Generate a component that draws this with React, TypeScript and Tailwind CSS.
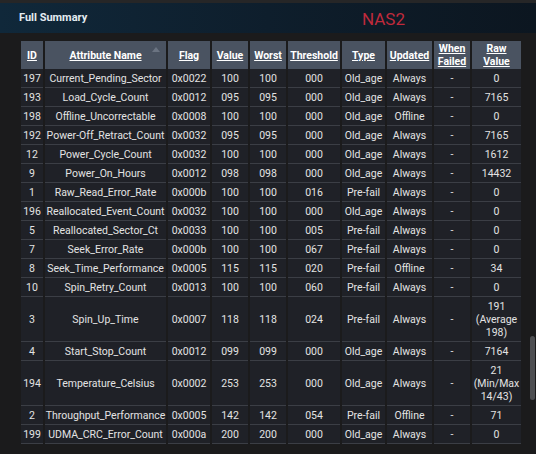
const rows: string[][] = [
  ['197', 'Current_Pending_Sector', '0x0022', '100', '100', '000', 'Old_age', 'Always', '-', '0'],
  ['193', 'Load_Cycle_Count', '0x0012', '095', '095', '000', 'Old_age', 'Always', '-', '7165'],
  ['198', 'Offline_Uncorrectable', '0x0008', '100', '100', '000', 'Old_age', 'Offline', '-', '0'],
  ['192', 'Power-Off_Retract_Count', '0x0032', '095', '095', '000', 'Old_age', 'Always', '-', '7165'],
  ['12', 'Power_Cycle_Count', '0x0032', '100', '100', '000', 'Old_age', 'Always', '-', '1612'],
  ['9', 'Power_On_Hours', '0x0012', '098', '098', '000', 'Old_age', 'Always', '-', '14432'],
  ['1', 'Raw_Read_Error_Rate', '0x000b', '100', '100', '016', 'Pre-fail', 'Always', '-', '0'],
  ['196', 'Reallocated_Event_Count', '0x0032', '100', '100', '000', 'Old_age', 'Always', '-', '0'],
  ['5', 'Reallocated_Sector_Ct', '0x0033', '100', '100', '005', 'Pre-fail', 'Always', '-', '0'],
  ['7', 'Seek_Error_Rate', '0x000b', '100', '100', '067', 'Pre-fail', 'Always', '-', '0'],
  ['8', 'Seek_Time_Performance', '0x0005', '115', '115', '020', 'Pre-fail', 'Offline', '-', '34'],
  ['10', 'Spin_Retry_Count', '0x0013', '100', '100', '060', 'Pre-fail', 'Always', '-', '0'],
  ['3', 'Spin_Up_Time', '0x0007', '118', '118', '024', 'Pre-fail', 'Always', '-', '191 (Average 198)'],
  ['4', 'Start_Stop_Count', '0x0012', '099', '099', '000', 'Old_age', 'Always', '-', '7164'],
  ['194', 'Temperature_Celsius', '0x0002', '253', '253', '000', 'Old_age', 'Always', '-', '21 (Min/Max 14/43)'],
  ['2', 'Throughput_Performance', '0x0005', '142', '142', '054', 'Pre-fail', 'Offline', '-', '71'],
  ['199', 'UDMA_CRC_Error_Count', '0x000a', '200', '200', '000', 'Old_age', 'Always', '-', '0'],
];

const headers = [
  { label: 'ID', w: 'w-[22px]' },
  { label: 'Attribute Name', w: 'w-[121px]' },
  { label: 'Flag', w: 'w-[42px]' },
  { label: 'Value', w: 'w-[36px]' },
  { label: 'Worst', w: 'w-[36px]' },
  { label: 'Threshold', w: 'w-[52px]' },
  { label: 'Type', w: 'w-[43px]' },
  { label: 'Updated', w: 'w-[45px]' },
  { label: 'When Failed', w: 'w-[36px]' },
  { label: 'Raw Value', w: 'w-[49px]' },
];

export default function App() {
  return (
    <div className="relative w-[536px] h-[454px] overflow-hidden bg-[#1b1b1c] font-['Roboto',sans-serif]">
      <div className="h-[3px] bg-[#262627]" />
      <div className="h-[30px] flex items-center relative bg-gradient-to-r from-[#10283a] via-[#0e1e2c] to-[#0c1620]">
        <span className="pl-[19px] pt-[1px] text-[11px] font-bold text-[#e4ecf2]">Full Summary</span>
        <span className="absolute left-[362px] top-[6px] text-[17px] leading-[20px] text-[#bf2a3c]">NAS2</span>
      </div>
      <div className="pl-[19px] pt-[8px]">
        <table className="table-fixed w-[504px] border-separate border-spacing-x-[2px] border-spacing-y-0 text-[10.5px] leading-[13px]">
          <thead>
            <tr>
              {headers.map((h) => (
                <th
                  key={h.label}
                  className={`${h.w} relative h-[28px] bg-[#4a5361] px-0 text-center align-middle font-bold text-white underline`}
                >
                  {h.label}
                  {h.label === 'Attribute Name' && (
                    <span className="absolute right-[6px] top-[6px] h-0 w-0 border-x-[4px] border-b-[5px] border-x-transparent border-b-[#6b7482]" />
                  )}
                </th>
              ))}
            </tr>
          </thead>
          <tbody>
            {rows.map((r) => (
              <tr key={r[0]}>
                {r.map((c, i) => (
                  <td
                    key={i}
                    className={`bg-[#1f2127] px-0 pt-[3px] pb-[2px] text-center align-middle text-[#e3e3e3] border-b border-[#3b3e45] ${i === 1 ? 'whitespace-nowrap' : 'whitespace-normal'}`}
                  >
                    {c}
                  </td>
                ))}
              </tr>
            ))}
          </tbody>
        </table>
      </div>
      <div className="absolute right-[1px] top-[336px] h-[64px] w-[5px] rounded-sm bg-[#4e4f52]" />
    </div>
  );
}
